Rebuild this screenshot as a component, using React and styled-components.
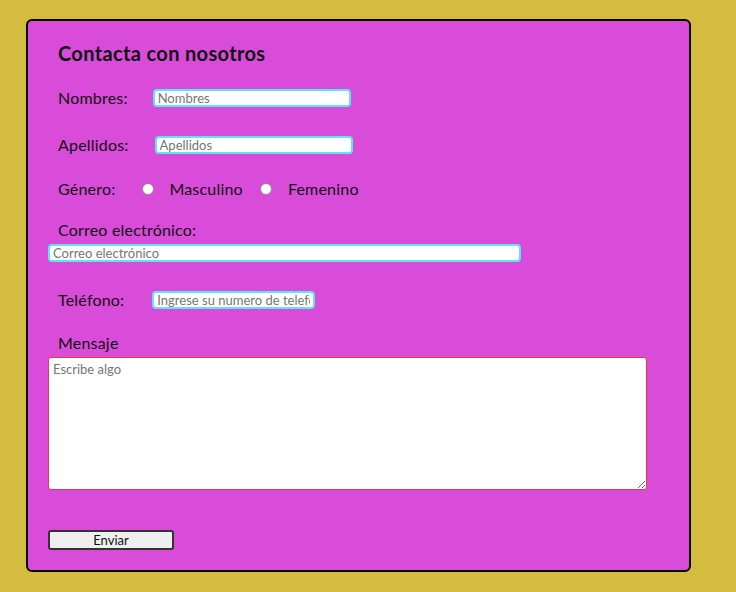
import React from 'react'
import styled, { createGlobalStyle } from 'styled-components'

const GlobalStyle = createGlobalStyle`
  html, body {
    margin: 0;
    background: #d4bc40;
    font-family: 'Trebuchet MS', Lato, 'Noto Sans', sans-serif;
  }
`

const Page = styled.div`
  padding: 19px 26px;
  min-height: 592px;
  box-sizing: border-box;
`

const Card = styled.form`
  width: 665px;
  height: 553px;
  box-sizing: border-box;
  background: #d94cd9;
  border: 2px solid #000;
  border-radius: 6px;
  padding: 21px 20px 20px;
  display: flex;
  flex-direction: column;
  align-items: flex-start;
`

const Title = styled.h2`
  margin: 0 0 0 10px;
  font-size: 20px;
  line-height: 23px;
  letter-spacing: 0.35px;
  font-weight: bold;
  color: #111;
`

const Row = styled.div`
  display: flex;
  align-items: center;
  height: 18px;
  margin-top: ${p => p.$mt}px;
  margin-left: 10px;
`

const Label = styled.label`
  font-size: 16px;
  line-height: 18px;
  letter-spacing: 0.2px;
  color: #111;
  margin-right: ${p => p.$mr ?? 26}px;
  margin-top: ${p => p.$mt ?? 0}px;
  margin-left: ${p => p.$ml ?? 0}px;
`

const Input = styled.input`
  width: ${p => p.$w}px;
  height: 18px;
  box-sizing: border-box;
  border: 2px solid #5ce6f2;
  border-radius: 4px;
  background: #fff;
  padding: 0 3px;
  font-family: inherit;
  font-size: 13px;
  margin-top: ${p => p.$mt ?? 0}px;
  &::placeholder { color: #767676; }
`

const Radio = styled.input.attrs({ type: 'radio' })`
  appearance: none;
  width: 12px;
  height: 12px;
  margin: 0 ${p => p.$mr}px 0 0;
  border: 1px solid #8a8a8a;
  border-radius: 50%;
  background: #fff;
`

const Area = styled.textarea`
  width: 599px;
  height: 133px;
  box-sizing: border-box;
  margin-top: 5px;
  border: 1px solid #f03a3a;
  border-radius: 3px;
  padding: 3px 4px;
  font-family: inherit;
  font-size: 13px;
  &::placeholder { color: #767676; }
`

const Button = styled.button`
  width: 126px;
  height: 20px;
  margin-top: 40px;
  border: 2px solid #333;
  border-radius: 3px;
  background: #efefef;
  font-family: inherit;
  font-size: 13px;
  color: #111;
  padding: 0;
`

export default function App() {
  return (
    <Page>
      <GlobalStyle />
      <Card onSubmit={e => e.preventDefault()}>
        <Title>Contacta con nosotros</Title>
        <Row $mt={24}>
          <Label $mr={25}>Nombres:</Label>
          <Input $w={198} placeholder="Nombres" />
        </Row>
        <Row $mt={29}>
          <Label>Apellidos:</Label>
          <Input $w={198} placeholder="Apellidos" />
        </Row>
        <Row $mt={26}>
          <Label $mr={27}>Género:</Label>
          <Radio name="g" $mr={15} />
          <Label $mr={17}>Masculino</Label>
          <Radio name="g" $mr={16} />
          <Label $mr={0}>Femenino</Label>
        </Row>
        <Label $mt={23} $ml={10} $mr={0}>Correo electrónico:</Label>
        <Input $w={473} $mt={5} placeholder="Correo electrónico" />
        <Row $mt={29}>
          <Label $mr={28}>Teléfono:</Label>
          <Input $w={163} placeholder="Ingrese su numero de telefono" />
        </Row>
        <Label $mt={25} $ml={10} $mr={0}>Mensaje</Label>
        <Area placeholder="Escribe algo" />
        <Button type="submit">Enviar</Button>
      </Card>
    </Page>
  )
}
